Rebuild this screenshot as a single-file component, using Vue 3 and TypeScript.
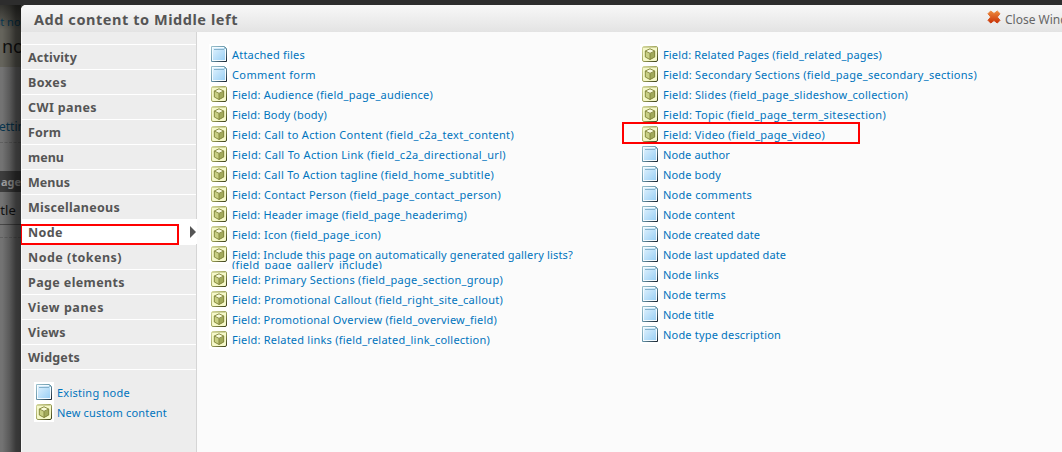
<script setup lang="ts">
import { nextTick } from 'vue'

type Kind = 'page' | 'cube'
interface Item { label: string; width: number; kind: Kind; second?: string }

const p = (label: string, width: number): Item => ({ label, width, kind: 'page' })
const c = (label: string, width: number, second?: string): Item => ({ label, width, kind: 'cube', second })

const categories: [string, number][] = [
  ['Activity', 49], ['Boxes', 39], ['CWI panes', 69], ['Form', 33], ['menu', 36], ['Menus', 42],
  ['Miscellaneous', 92], ['Node', 35], ['Node (tokens)', 94], ['Page elements', 97],
  ['View panes', 76], ['Views', 38], ['Widgets', 52],
]

const extras: Item[] = [p('Existing node', 73), c('New custom content', 110)]

const columns: Item[][] = [
  [
    p('Attached files', 73),
    p('Comment form', 84),
    c('Field: Audience (field_page_audience)', 201),
    c('Field: Body (body)', 95),
    c('Field: Call to Action Content (field_c2a_text_content)', 282),
    c('Field: Call To Action Link (field_c2a_directional_url)', 274),
    c('Field: Call To Action tagline (field_home_subtitle)', 262),
    c('Field: Contact Person (field_page_contact_person)', 269),
    c('Field: Header image (field_page_headerimg)', 235),
    c('Field: Icon (field_page_icon)', 149),
    c('Field: Include this page on automatically generated gallery lists?', 341, '(field_page_gallery_include)'),
    c('Field: Primary Sections (field_page_section_group)', 271),
    c('Field: Promotional Callout (field_right_site_callout)', 271),
    c('Field: Promotional Overview (field_overview_field)', 265),
    c('Field: Related links (field_related_link_collection)', 258),
  ],
  [
    c('Field: Related Pages (field_related_pages)', 219),
    c('Field: Secondary Sections (field_page_secondary_sections)', 314),
    c('Field: Slides (field_page_slideshow_collection)', 245),
    c('Field: Topic (field_page_term_sitesection)', 223),
    c('Field: Video (field_page_video)', 162),
    p('Node author', 67),
    p('Node body', 58),
    p('Node comments', 89),
    p('Node content', 72),
    p('Node created date', 97),
    p('Node last updated date', 123),
    p('Node links', 56),
    p('Node terms', 63),
    p('Node title', 51),
    p('Node type description', 118),
  ],
]

const vFit = {
  mounted(el: HTMLElement, binding: { value: number }) {
    nextTick(() => {
      const natural = el.getBoundingClientRect().width
      const n = (el.textContent ?? '').length
      if (n > 0) el.style.letterSpacing = `${(binding.value - natural) / n}px`
    })
  },
}
</script>

<template>
  <div class="screen">
    <svg width="0" height="0" class="defs">
      <defs>
        <linearGradient id="blue" x1="0" y1="0" x2="1" y2="1">
          <stop offset="0" stop-color="#def1fd" /><stop offset="1" stop-color="#9bd0f5" />
        </linearGradient>
        <linearGradient id="edge" x1="0" y1="0" x2="1" y2="1">
          <stop offset="0" stop-color="#9bc0cc" /><stop offset=".5" stop-color="#6796ab" /><stop offset="1" stop-color="#18222d" />
        </linearGradient>
        <linearGradient id="olive" x1="0" y1="0" x2="1" y2="1">
          <stop offset="0" stop-color="#d5d8a0" /><stop offset=".5" stop-color="#a0a45c" /><stop offset="1" stop-color="#363a16" />
        </linearGradient>
        <linearGradient id="cross" x1="0" y1="0" x2="0" y2="1">
          <stop offset="0" stop-color="#ed8a3d" /><stop offset="1" stop-color="#c93205" />
        </linearGradient>
        <symbol id="icon-page" viewBox="0 0 16 16">
          <path d="M.5 .5H13.5L15.5 2.5V15.5H.5Z" fill="#f4fbff" stroke="url(#edge)" />
          <path d="M2 2H13L14 3V14H2Z" fill="url(#blue)" />
          <path d="M3 3.5H13" stroke="#86b2cb" />
          <path d="M13.5 1V2.5H15" fill="none" stroke="#8fb9c8" />
        </symbol>
        <symbol id="icon-cube" viewBox="0 0 16 16">
          <rect x=".5" y=".5" width="15" height="15" rx="1.5" fill="#f5f8c9" stroke="url(#olive)" />
          <path d="M1 1.5H14" stroke="#d0d39a" />
          <path d="M8 2.5L13 5V11L8 13.8L3 11V5Z" fill="#c8cf83" />
          <path d="M8 7.5L13 5V11L8 13.8Z" fill="#a1a95a" />
          <path d="M8 2.5L13 5L8 7.5L3 5Z" fill="#f9fbdc" />
          <path d="M8 2.8L12.7 5V11L8 13.5L3.3 11V5ZM3.3 5L8 7.3L12.7 5M8 7.3V13.5" fill="none" stroke="#81853b" stroke-width=".9" />
        </symbol>
      </defs>
    </svg>

    <div class="behind">
      <div class="behind-top"><span class="crumb">st no</span><span class="heading">no</span></div>
      <div class="behind-main">
        <span class="setting">etting</span>
        <span class="dash"></span>
        <span class="pagebar">age</span>
        <span class="field">itle</span>
        <span class="dash low"></span>
      </div>
      <div class="shade"></div>
    </div>

    <div class="modal">
      <header class="head">
        <h1><span v-fit="204">Add content to Middle left</span></h1>
        <a class="close">
          <svg width="14" height="14" viewBox="0 0 14 14"><path d="M3.7 1L7 3.5L10.3 1L13 3.7L10.3 7L13 10.3L10.3 13L7 10.5L3.7 13L1 10.3L3.7 7L1 3.7Z" fill="url(#cross)" stroke="url(#cross)" stroke-linejoin="round" /></svg>
          <span>Close Window</span>
        </a>
      </header>
      <div class="body">
        <aside class="side">
          <nav>
            <a v-for="[name, width] in categories" :key="name" class="category" :class="{ active: name === 'Node' }">
              <span v-fit="width">{{ name }}</span>
              <span v-if="name === 'Node'" class="mark"></span>
              <i v-if="name === 'Node'" class="arrow"></i>
            </a>
          </nav>
          <div class="extras">
            <a v-for="item in extras" :key="item.label" class="item">
              <svg class="icon"><use :href="'#icon-' + item.kind" /></svg>
              <span class="label"><span v-fit="item.width">{{ item.label }}</span></span>
            </a>
          </div>
        </aside>
        <main class="content">
          <div v-for="(column, i) in columns" :key="i" class="column">
            <a v-for="item in column" :key="item.label" class="item" :class="{ tall: item.second }">
              <svg class="icon"><use :href="'#icon-' + item.kind" /></svg>
              <span class="label">
                <span v-fit="item.width">{{ item.label }}</span>
                <template v-if="item.second"><br><span v-fit="150">{{ item.second }}</span></template>
              </span>
              <span v-if="item.label.startsWith('Field: Video')" class="mark video"></span>
            </a>
          </div>
        </main>
      </div>
    </div>
  </div>
</template>

<style>
body { margin: 0; overflow: hidden; }
</style>

<style scoped>
.screen { position: relative; width: 1062px; height: 452px; overflow: hidden; background: #2d2d2d; font-family: "Noto Sans", "Open Sans", sans-serif; font-size: 11px; white-space: nowrap; }
.screen * { box-sizing: border-box; }
.defs { position: absolute; }
.behind { position: absolute; left: 0; top: 5px; width: 24px; height: 447px; overflow: hidden; background: #737373; }
.behind-top { height: 62px; background: linear-gradient(#33332f, #65645c 25px); }
.behind span { position: absolute; }
.crumb { left: -5px; top: 9px; color: #063650; }
.heading { left: 2px; top: 29px; font-size: 18px; color: #111; }
.setting { left: -1px; top: 113px; font-size: 12px; color: #063650; }
.dash { left: 0; top: 137px; width: 21px; border-top: 1px dashed #606060; }
.dash.low { top: 232px; }
.behind .pagebar { left: 0; top: 166px; width: 24px; height: 21px; padding-left: 1px; line-height: 21px; background: #3d3d3d; color: #a5a5a5; font-weight: bold; }
.field { left: -3px; top: 187px; width: 24px; height: 33px; line-height: 37px; font-size: 13px; color: #111; border-bottom: 1px solid #474747; }
.shade { position: absolute; left: 0; top: 0; width: 21px; height: 100%; background: linear-gradient(90deg, rgba(0,0,0,0) 10%, rgba(0,0,0,.22) 45%, rgba(0,0,0,.5) 75%, rgba(0,0,0,.56)); }
.modal { position: absolute; left: 21px; top: 5px; width: 1060px; height: 460px; border-radius: 5px 0 0; overflow: hidden; background: #fbfbfb; }
.head { display: flex; height: 27px; background: linear-gradient(#f8f8f8, #e3e3e3); color: #555; }
h1 { margin: 0; padding-left: 13px; font-size: 14.5px; line-height: 28px; width: 966px; flex: none; }
.close { display: flex; align-items: flex-start; padding-top: 5px; gap: 4px; color: #666; font-size: 12px; line-height: 20px; }
.close svg { flex: none; }
.body { display: flex; height: 433px; }
.side { flex: none; width: 176px; border-left: 1px solid #f8f8f8; border-right: 1px solid #d5d5d5; background: #ededed; padding-top: 12px; }
nav { border-bottom: 1px solid #fff; }
.category { display: block; position: relative; height: 25px; padding-left: 6px; line-height: 25px; border-top: 1px solid #fff; color: #555; font-weight: bold; font-size: 12.5px; }
.category.active { background: #fff; margin-right: -1px; }
.mark { position: absolute; left: -2px; top: 4px; width: 159px; height: 21px; border: 2px solid #f00; z-index: 2; }
.arrow { position: absolute; right: 1px; top: 6px; border-left: 6px solid #555; border-top: 6px solid transparent; border-bottom: 6px solid transparent; }
.extras { padding: 12px 0 0 12px; }
.extras .item { width: 160px; }
.content { display: flex; padding: 12px 0 0 12px; }
.column { flex: none; width: 431px; }
.item { position: relative; display: flex; height: 20px; color: #0074bd; }
.item.tall { height: 25px; }
.icon { flex: none; width: 20px; height: 20px; padding: 2px; background: #fff; }
.label { padding-left: 3px; padding-top: 6px; height: 100%; line-height: 10px; overflow: hidden; clip-path: inset(0); }
.video { left: -18px; top: -2px; width: 238px; height: 22px; }
</style>
